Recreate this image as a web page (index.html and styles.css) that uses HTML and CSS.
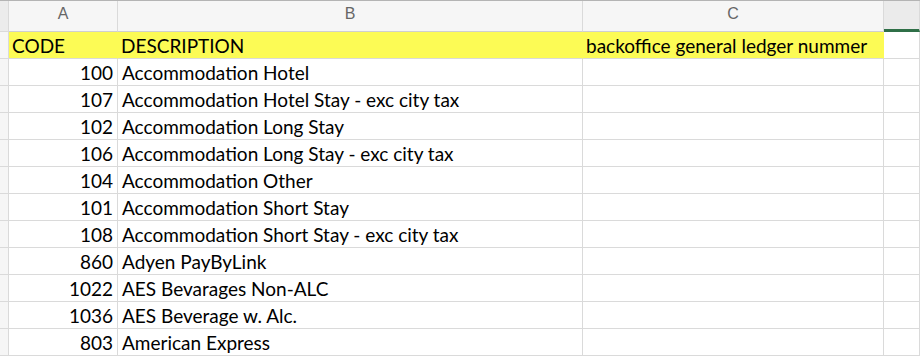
FILE: index.html
```html
<!DOCTYPE html>
<html>
<head>
<meta charset="utf-8">
<link rel="stylesheet" href="styles.css">
</head>
<body>
<div class="sheet">
  <div class="corner"></div>
  <div class="colhead">A</div>
  <div class="colhead">B</div>
  <div class="colhead">C</div>
  <div class="colhead sel"></div>

  <div class="rowhead"></div>
  <div class="cell hl">CODE</div>
  <div class="cell hl">DESCRIPTION</div>
  <div class="cell hl">backoffice general ledger nummer</div>
  <div class="cell"></div>

  <div class="rowhead"></div><div class="cell num">100</div><div class="cell">Accommodation Hotel</div><div class="cell"></div><div class="cell"></div>
  <div class="rowhead"></div><div class="cell num">107</div><div class="cell">Accommodation Hotel Stay - exc city tax</div><div class="cell"></div><div class="cell"></div>
  <div class="rowhead"></div><div class="cell num">102</div><div class="cell">Accommodation Long Stay</div><div class="cell"></div><div class="cell"></div>
  <div class="rowhead"></div><div class="cell num">106</div><div class="cell">Accommodation Long Stay - exc city tax</div><div class="cell"></div><div class="cell"></div>
  <div class="rowhead"></div><div class="cell num">104</div><div class="cell">Accommodation Other</div><div class="cell"></div><div class="cell"></div>
  <div class="rowhead"></div><div class="cell num">101</div><div class="cell">Accommodation Short Stay</div><div class="cell"></div><div class="cell"></div>
  <div class="rowhead"></div><div class="cell num">108</div><div class="cell">Accommodation Short Stay - exc city tax</div><div class="cell"></div><div class="cell"></div>
  <div class="rowhead"></div><div class="cell num">860</div><div class="cell">Adyen PayByLink</div><div class="cell"></div><div class="cell"></div>
  <div class="rowhead"></div><div class="cell num">1022</div><div class="cell">AES Bevarages Non-ALC</div><div class="cell"></div><div class="cell"></div>
  <div class="rowhead"></div><div class="cell num">1036</div><div class="cell">AES Beverage w. Alc.</div><div class="cell"></div><div class="cell"></div>
  <div class="rowhead"></div><div class="cell num">803</div><div class="cell">American Express</div><div class="cell"></div><div class="cell"></div>
</div>
</body>
</html>
```
FILE: styles.css
```css
html, body {
  margin: 0;
  padding: 0;
  background: #ffffff;
  overflow: hidden;
}
.sheet {
  display: grid;
  grid-template-columns: 9px 109px 465px 301px 1fr;
  grid-template-rows: 31px repeat(12, 27px);
  border-top: 1px solid #b4b4b4;
  width: 920px;
}
.sheet > div {
  box-sizing: border-box;
  border-right: 1px solid #dadada;
  border-bottom: 1px solid #dadada;
  white-space: nowrap;
  overflow: hidden;
}
.corner {
  background: #ececec;
}
.colhead {
  background: #f6f6f6;
  color: #666666;
  font-family: "Liberation Sans", Arial, sans-serif;
  font-size: 16px;
  display: flex;
  align-items: center;
  justify-content: center;
  padding-bottom: 4px;
  border-bottom-color: #cfcfcf !important;
}
.colhead.sel {
  background: #ebebeb;
  border-bottom: 3px solid #2f6f47 !important;
}
.rowhead {
  background: #f6f6f6;
}
.cell {
  font-family: Lato, "Liberation Sans", sans-serif;
  font-size: 19px;
  color: #000000;
  display: flex;
  align-items: center;
  padding-left: 4px;
  padding-right: 4px;
}
.cell.num {
  justify-content: flex-end;
}
.cell.hl {
  background: #fcfb55;
  border-right-color: #fcfb55 !important;
  padding-left: 3px;
}
```
